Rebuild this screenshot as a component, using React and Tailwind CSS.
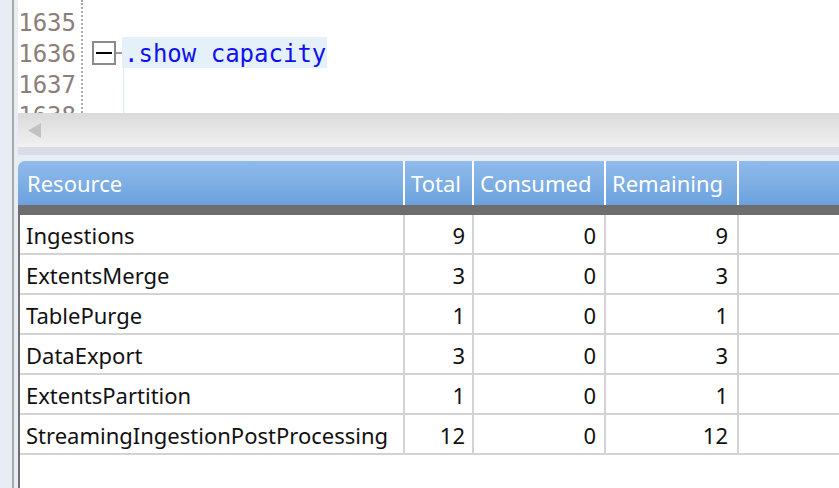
const rows = [
  ['Ingestions', 9, 0, 9],
  ['ExtentsMerge', 3, 0, 3],
  ['TablePurge', 1, 0, 1],
  ['DataExport', 3, 0, 3],
  ['ExtentsPartition', 1, 0, 1],
  ['StreamingIngestionPostProcessing', 12, 0, 12],
]

const mono = { fontFamily: '"DejaVu Sans Mono", monospace' }

function LineNo({ n }) {
  return <div className="w-[58px] translate-y-[2px] text-right text-[#8b8079]">{n}</div>
}

function Editor() {
  return (
    <div className="relative h-[113px] overflow-hidden bg-white" style={mono}>
      <div className="absolute left-[63px] top-0 h-full border-l-2 border-dotted border-[#a8a8a8]" />
      <div className="absolute left-[105px] top-[68px] h-full border-l border-[#dcebf4]" />
      <div className="pt-[6px] text-[24px] leading-[31px]">
        <div className="flex h-[31px]">
          <LineNo n="1635" />
        </div>
        <div className="flex h-[31px]">
          <LineNo n="1636" />
          <div className="ml-[16px] flex items-center">
            <div className="flex h-[24px] w-[24px] items-center justify-center border-2 border-[#8a8a8a] bg-white">
              <div className="h-[2px] w-[16px] bg-black" />
            </div>
            <div className="h-[2px] w-[6px] bg-[#9a9a9a]" />
          </div>
          <div className="h-[31px] bg-[#e5f1f8] pl-[2px] pr-[1px] text-[#1010f0]">
            <div className="translate-y-[2px]">.show capacity</div>
          </div>
        </div>
        <div className="flex h-[31px]">
          <LineNo n="1637" />
        </div>
        <div className="flex h-[31px]">
          <LineNo n="1638" />
        </div>
      </div>
    </div>
  )
}

function Scrollbar() {
  return (
    <div>
      <div className="flex h-[34px] items-center bg-gradient-to-b from-[#dadada] to-[#f1f1f1] pl-[10px]">
        <svg width="14" height="15" viewBox="0 0 14 15">
          <polygon points="13,0 13,15 0,7.5" fill="#c2c2c2" />
        </svg>
      </div>
      <div className="h-[8px] bg-[#d7dce5]" />
    </div>
  )
}

function Grid() {
  return (
    <div className="mt-[6px]" style={{ fontFamily: '"Noto Sans", "Open Sans", sans-serif' }}>
      <div className="flex h-[44px] rounded-tl-[7px] bg-gradient-to-b from-[#90bbea] to-[#6ba2de] text-[22px] text-white">
        <div className="flex w-[387px] items-center border-r-2 border-white pl-[9px]">Resource</div>
        <div className="flex w-[69px] items-center border-r-2 border-white pl-[6px]">Total</div>
        <div className="flex w-[132px] items-center border-r-2 border-white pl-[6px]">Consumed</div>
        <div className="flex w-[133px] items-center border-r-2 border-white pl-[6px]">Remaining</div>
        <div className="flex-1" />
      </div>
      <div className="h-[10px] bg-[#6e6e6e]" />
      <div className="h-[273px] border-l-2 border-[#6e6e6e] bg-white text-[22px] text-[#111]">
        {rows.map((r) => (
          <div key={r[0]} className="flex h-[40px] border-b-2 border-[#d3d3d3]">
            <div className="flex w-[385px] items-center border-r-2 border-[#d3d3d3] pl-[6px] pt-[3px]">{r[0]}</div>
            <div className="flex w-[69px] items-center justify-end border-r-2 border-[#d3d3d3] pr-[7px] pt-[3px]">{r[1]}</div>
            <div className="flex w-[132px] items-center justify-end border-r-2 border-[#d3d3d3] pr-[8px] pt-[3px]">{r[2]}</div>
            <div className="flex w-[133px] items-center justify-end border-r-2 border-[#d3d3d3] pr-[9px] pt-[3px]">{r[3]}</div>
            <div className="flex-1" />
          </div>
        ))}
      </div>
    </div>
  )
}

export default function App() {
  return (
    <div className="flex h-[488px] w-[839px] overflow-hidden bg-[#e8ecf4]">
      <div className="w-[12px]" />
      <div className="w-[2px] bg-[#a9a9a9]" />
      <div className="w-[4px]" />
      <div className="flex-1">
        <Editor />
        <Scrollbar />
        <Grid />
      </div>
    </div>
  )
}
